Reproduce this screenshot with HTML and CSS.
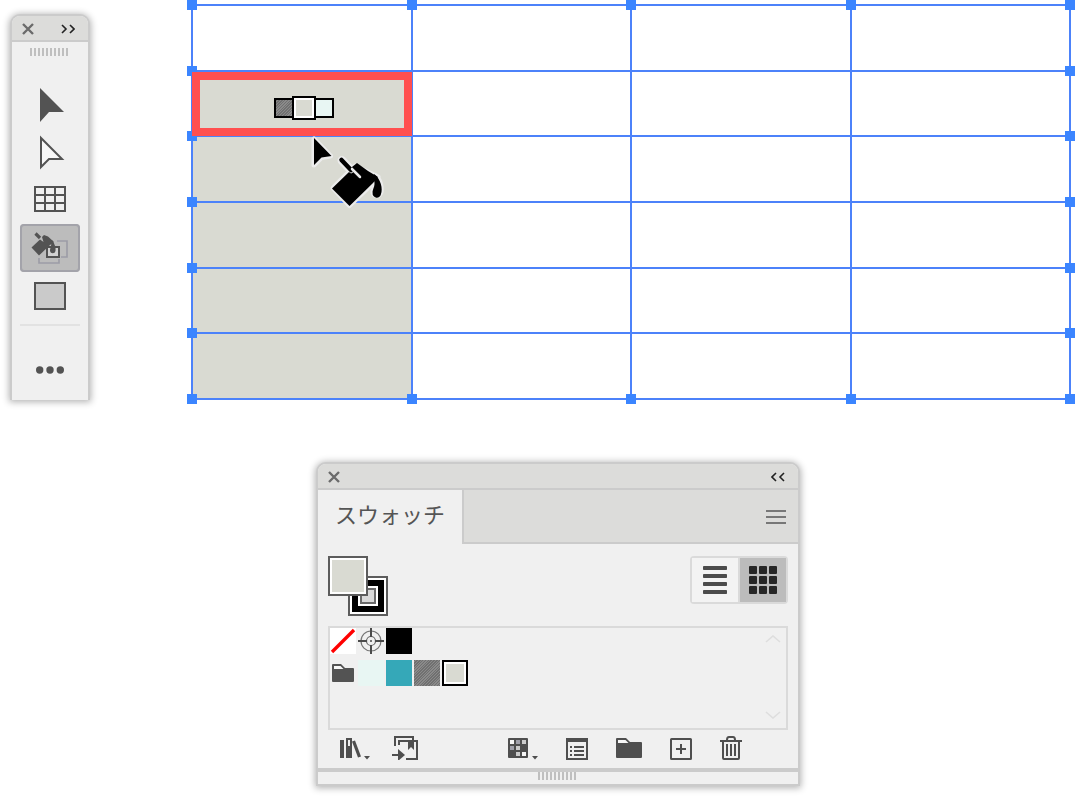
FILE: index.html
```
<!DOCTYPE html>
<html lang="ja">
<head>
  <meta charset="UTF-8" />
  <meta name="viewport" content="width=device-width, initial-scale=1" />
  <title>スウォッチ</title>
  <link rel="stylesheet" href="styles.css">
</head>
<body>

  <main class="workspace">
    <!-- Tools -->
    <aside class="toolbar">
      <div class="titlebar">
        <button type="button" class="icon-btn" aria-label="Close">
          <svg width="12" height="12" viewBox="0 0 12 12"><path d="M1 1L11 11M11 1L1 11" stroke="#6b6b6b" stroke-width="2.4" fill="none"/></svg>
        </button>
        <button type="button" class="icon-btn" aria-label="Expand">
          <svg width="14" height="10" viewBox="0 0 14 10"><path d="M1 1L5 5L1 9M9 1L13 5L9 9" stroke="#222" stroke-width="1.6" fill="none"/></svg>
        </button>
      </div>
      <div class="grip"></div>
      <div class="tools">
        <button type="button" class="tool" aria-label="Selection">
          <svg width="32" height="36" viewBox="0 0 32 36"><path d="M6 2V36L15 26H30Z" fill="#535353"/></svg>
        </button>
        <button type="button" class="tool" aria-label="Direct selection">
          <svg width="32" height="36" viewBox="0 0 32 36"><path d="M7 4V33L15 25H28Z" fill="#f7f7f7" stroke="#535353" stroke-width="2"/></svg>
        </button>
        <button type="button" class="tool" aria-label="Grid">
          <svg width="32" height="28" viewBox="0 0 32 28"><path d="M1 1H31V25H1ZM11 1V25M21 1V25M1 9H31M1 17H31" fill="none" stroke="#535353" stroke-width="2"/></svg>
        </button>
        <button type="button" class="tool active" aria-label="Live paint bucket">
          <svg width="60" height="48" viewBox="0 0 60 48">
            <path d="M37 17H47V33H41M19 34V39H39V35" fill="none" stroke="#9c9ca6" stroke-width="1.6"/>
            <path d="M27 23H39V33H27Z" fill="#d2d2d2" stroke="#535353" stroke-width="2"/>
            <path d="M11.500 23.500L20 15.500L23.500 18L22 13L24 11L28 12.500L34 18L30 21L19 31.500Z" fill="#535353"/>
            <path d="M15.500 9.500L20 14" stroke="#535353" stroke-width="3.200"/>
            <path d="M32 16C35 20 36 24 35.500 27A2.800 2.800 0 0 1 30 27C30 24 32 21 31 17Z" fill="#535353"/>
          </svg>
        </button>
        <button type="button" class="tool" aria-label="Rectangle">
          <svg width="32" height="28" viewBox="0 0 32 28"><path d="M1 1H31V27H1Z" fill="#cacaca" stroke="#535353" stroke-width="2"/></svg>
        </button>
      </div>
      <button type="button" class="tool more" aria-label="More tools">
        <svg width="28" height="8" viewBox="0 0 28 8" fill="#535353"><circle cx="3.700" cy="4" r="3.700"/><circle cx="14" cy="4" r="3.700"/><circle cx="24.300" cy="4" r="3.700"/></svg>
      </button>
    </aside>

    <!-- Artboard grid -->
    <section class="artboard">
      <div class="cell"><i class="handle tl"></i></div>
      <div class="cell"><i class="handle tl"></i></div>
      <div class="cell"><i class="handle tl"></i></div>
      <div class="cell"><i class="handle tl"></i><i class="handle tr"></i></div>

      <div class="cell filled">
        <i class="handle tl"></i>
        <div class="highlight">
          <span class="pick gray"></span>
          <span class="pick current"></span>
          <span class="pick mint"></span>
        </div>
        <svg class="cursor" width="80" height="80" viewBox="0 0 80 80">
          <g stroke="#ececec" stroke-width="5" stroke-linejoin="round" stroke-linecap="round">
            <path d="M6 7V33L13.500 25.500L22.500 24Z"/>
            <path d="M25 56L41 40L47 34L70 45L65 51L41.500 73.500Z"/>
            <path d="M34 28.500L42 37" stroke-width="9"/>
            <path d="M68 44C74 50 74 60 72 62A4 4 0 0 1 65 61C64 57 70 53 66 47Z"/>
          </g>
          <path d="M6 6V33L13.500 25.500L23.500 24Z"/>
          <path d="M24 56.500L41 40L49 46L44 35L49 31L60 39L70 45L65 51L41.500 74Z"/>
          <path d="M33.500 28L43 38" stroke="#000" stroke-width="4.500" stroke-linecap="round"/>
          <path d="M44 37L52 45" stroke="#ececec" stroke-width="2.500" stroke-linecap="round"/>
          <path d="M66 42C73 47 75 57 73 62A4.200 4.200 0 0 1 64.600 61C64 57 69 53 65 46Z"/>
        </svg>
      </div>
      <div class="cell"></div>
      <div class="cell"></div>
      <div class="cell"><i class="handle tr"></i></div>

      <div class="cell filled"><i class="handle tl"></i></div>
      <div class="cell"></div>
      <div class="cell"></div>
      <div class="cell"><i class="handle tr"></i></div>

      <div class="cell filled"><i class="handle tl"></i></div>
      <div class="cell"></div>
      <div class="cell"></div>
      <div class="cell"><i class="handle tr"></i></div>

      <div class="cell filled"><i class="handle tl"></i></div>
      <div class="cell"></div>
      <div class="cell"></div>
      <div class="cell"><i class="handle tr"></i></div>

      <div class="cell filled"><i class="handle tl"></i><i class="handle bl"></i></div>
      <div class="cell"><i class="handle bl"></i></div>
      <div class="cell"><i class="handle bl"></i></div>
      <div class="cell"><i class="handle tr"></i><i class="handle bl"></i><i class="handle br"></i></div>
    </section>
  </main>

  <!-- Swatches panel -->
  <section class="panel">
    <div class="titlebar">
      <button type="button" class="icon-btn" aria-label="Close">
        <svg width="12" height="12" viewBox="0 0 12 12"><path d="M1 1L11 11M11 1L1 11" stroke="#6b6b6b" stroke-width="2.4" fill="none"/></svg>
      </button>
      <button type="button" class="icon-btn" aria-label="Collapse">
        <svg width="14" height="10" viewBox="0 0 14 10"><path d="M5 1L1 5L5 9M13 1L9 5L13 9" stroke="#222" stroke-width="1.6" fill="none"/></svg>
      </button>
    </div>

    <div class="tabs">
      <button type="button" class="tab">スウォッチ</button>
      <div class="tab-rest">
        <button type="button" class="icon-btn" aria-label="Menu">
          <svg width="20" height="14" viewBox="0 0 20 14"><path d="M0 1H20M0 7H20M0 13H20" stroke="#777" stroke-width="2"/></svg>
        </button>
      </div>
    </div>

    <div class="options">
      <div class="paint">
        <button type="button" class="paint-fill" aria-label="Fill"></button>
        <button type="button" class="paint-stroke" aria-label="Stroke"><span></span></button>
      </div>
      <div class="views">
        <button type="button" class="view" aria-label="List view">
          <svg width="24" height="28" viewBox="0 0 24 28" fill="#4b4b4b"><rect width="24" height="4" rx="0.800"/><rect y="8" width="24" height="4" rx="0.800"/><rect y="16" width="24" height="4" rx="0.800"/><rect y="24" width="24" height="4" rx="0.800"/></svg>
        </button>
        <button type="button" class="view on" aria-label="Thumbnail view">
          <svg width="28" height="28" viewBox="0 0 28 28" fill="#262626">
            <rect width="8" height="8" rx="1"/><rect x="10" width="8" height="8" rx="1"/><rect x="20" width="8" height="8" rx="1"/>
            <rect y="10" width="8" height="8" rx="1"/><rect x="10" y="10" width="8" height="8" rx="1"/><rect x="20" y="10" width="8" height="8" rx="1"/>
            <rect y="20" width="8" height="8" rx="1"/><rect x="10" y="20" width="8" height="8" rx="1"/><rect x="20" y="20" width="8" height="8" rx="1"/>
          </svg>
        </button>
      </div>
    </div>

    <div class="list">
      <div class="swatches">
        <div class="swatch-row">
          <button type="button" class="swatch none" aria-label="None">
            <svg width="26" height="26" viewBox="0 0 26 26"><path d="M2 24L24 2" stroke="#f00" stroke-width="3.400"/></svg>
          </button>
          <button type="button" class="swatch" aria-label="Registration">
            <svg width="26" height="26" viewBox="0 0 26 26" fill="none">
              <circle cx="13" cy="13" r="10" stroke="#777" stroke-width="1.200"/>
              <circle cx="13" cy="13" r="4.500" stroke="#666" stroke-width="1.200"/>
              <path d="M13 0V9M13 17V26M0 13H9M17 13H26" stroke="#4b4b4b" stroke-width="2"/>
              <circle cx="13" cy="13" r="1" fill="#4b4b4b"/>
            </svg>
          </button>
          <button type="button" class="swatch black" aria-label="Black"></button>
        </div>
        <div class="swatch-row">
          <button type="button" class="swatch" aria-label="Color group">
            <svg width="26" height="26" viewBox="0 0 26 26"><path d="M2 22V5Q2 4 3 4H11L15 8H23Q24 8 24 9V21Q24 22 23 22H3Q2 22 2 21Z" fill="#535353"/><path d="M4 6H10.500L13.500 9H4Z" fill="#f7f7f7"/></svg>
          </button>
          <button type="button" class="swatch mint" aria-label="Mint"></button>
          <button type="button" class="swatch teal" aria-label="Teal"></button>
          <button type="button" class="swatch gray" aria-label="Gray"></button>
          <button type="button" class="swatch selected" aria-label="Light gray"></button>
        </div>
      </div>
      <div class="scroll">
        <svg width="16" height="8" viewBox="0 0 16 8"><path d="M1 7L8 1L15 7" fill="none" stroke="#dedede" stroke-width="1.600"/></svg>
        <svg width="16" height="8" viewBox="0 0 16 8"><path d="M1 1L8 7L15 1" fill="none" stroke="#dedede" stroke-width="1.600"/></svg>
      </div>
    </div>

    <div class="actions">
      <div class="action-group">
        <button type="button" class="icon-btn" aria-label="Swatch libraries">
          <svg width="30" height="24" viewBox="0 0 30 24" fill="#4f4f4f">
            <rect y="4" width="4" height="18"/><path d="M6 2H12V22H6ZM8 4V10H10V4Z" fill-rule="evenodd"/><path d="M12 5.500L15 4.500L21 20.500L18 21.500Z"/><path d="M24 20H30L27 23.500Z"/>
          </svg>
        </button>
        <button type="button" class="icon-btn" aria-label="Add to library">
          <svg width="26" height="24" viewBox="0 0 26 24" fill="none" stroke="#4f4f4f" stroke-width="2">
            <path d="M3 10V1H21V4M7 9V5H25V23H14"/><path d="M16 4H22V14L19 11L16 14Z" fill="#4f4f4f" stroke="none"/><path d="M0 19H8"/><path d="M6 13L13 19L6 25Z" fill="#4f4f4f" stroke="none"/>
          </svg>
        </button>
      </div>
      <div class="action-group wide">
        <button type="button" class="icon-btn" aria-label="Show swatch kinds">
          <svg width="30" height="24" viewBox="0 0 30 24">
            <rect y="2" width="20" height="20" rx="1" fill="#4f4f4f"/>
            <path d="M2 4H6V8H2ZM14 16H18V20H14Z" fill="#f7f7f7"/><path d="M14 4H18V8H14ZM8 10H12V14H8ZM8 16H12V20H8Z" fill="#ccc"/><path d="M8 4H12V8H8ZM2 10H6V14H2Z" fill="#a0a0aa"/>
            <path d="M24 20H30L27 23.500Z" fill="#4f4f4f"/>
          </svg>
        </button>
        <button type="button" class="icon-btn" aria-label="Swatch options">
          <svg width="22" height="24" viewBox="0 0 22 24" fill="none" stroke="#4f4f4f" stroke-width="2"><path d="M1 3H21V23H1Z"/><path d="M1 4H21" stroke-width="4"/><path d="M4 11H6M8 11H18M4 15H6M8 15H18M4 19H6M8 19H18"/></svg>
        </button>
        <button type="button" class="icon-btn" aria-label="New color group">
          <svg width="26" height="24" viewBox="0 0 26 24"><path d="M0 3Q0 2 1 2H10L14 6H25Q26 6 26 7V21Q26 22 25 22H1Q0 22 0 21Z" fill="#4f4f4f"/><path d="M2 4H9.500L12.500 7H2Z" fill="#f7f7f7"/></svg>
        </button>
        <button type="button" class="icon-btn" aria-label="New swatch">
          <svg width="22" height="24" viewBox="0 0 22 24" fill="none" stroke="#4f4f4f" stroke-width="2"><rect x="1" y="3" width="20" height="20" rx="0.500"/><path d="M11 8V18M6 13H16"/></svg>
        </button>
        <button type="button" class="icon-btn" aria-label="Delete swatch">
          <svg width="22" height="24" viewBox="0 0 22 24" fill="none" stroke="#4f4f4f" stroke-width="2"><path d="M0 5H22M3 5V22Q3 23 4 23H18Q19 23 19 22V5M7 8V20M11 8V20M15 8V20M7 4Q7 1 9 1H13Q15 1 15 4"/></svg>
        </button>
      </div>
    </div>
    <div class="resize"><div class="grip"></div></div>
  </section>

</body>
</html>
```
FILE: styles.css
```
* {
  box-sizing: border-box;
}

body {
  margin: 0;
  background: #fff;
  font-family: "Noto Sans CJK JP", sans-serif;
  overflow-x: hidden;
}

button {
  padding: 0;
  border: none;
  background: none;
  font-family: inherit;
  cursor: pointer;
}

svg {
  display: block;
}

.workspace {
  display: flex;
  gap: 101px;
  padding: 4px 4px 0 10px;
}

/* Shared panel parts */
.toolbar,
.panel {
  background: #f0f0f0;
  border: 2px solid #cbcbcb;
  border-radius: 10px 10px 0 0;
  box-shadow: 0 1px 7px 1px rgba(0, 0, 0, 0.3);
}

.titlebar {
  display: flex;
  justify-content: space-between;
  align-items: center;
  height: 26px;
  padding: 2px 13px 0 10px;
  background: #dcdcda;
  border-bottom: 2px solid #cbcbcb;
  border-radius: 8px 8px 0 0;
}

.grip {
  width: 40px;
  height: 8px;
  margin: 0 auto;
  background: repeating-linear-gradient(to right, #bfbfbf 0 2px, transparent 2px 4px);
}

/* Toolbar */
.toolbar {
  width: 80px;
  flex: none;
  margin-top: 10px;
  border-bottom: none;
}

.toolbar .grip {
  margin-top: 6px;
}

.tools {
  margin: 24px 8px 0;
  padding-bottom: 4px;
  border-bottom: 2px solid #e2e2e2;
}

.tool {
  display: flex;
  justify-content: center;
  align-items: center;
  width: 100%;
  height: 48px;
}

.tool.active {
  background: #bcbcbc;
  border-radius: 4px;
  box-shadow: inset 0 0 0 2px #a3a3aa;
}

.more {
  margin: 20px 0 6px;
}

/* Artboard */
.artboard {
  flex: 1;
  display: grid;
  grid-template-columns: repeat(4, 1fr);
  grid-template-rows: repeat(6, 1fr);
  gap: 2px;
  padding: 2px;
  background: #4c82fa;
}

.cell {
  position: relative;
  background: #fff;
}

.filled {
  background: #d9dad2;
}

.handle {
  position: absolute;
  z-index: 1;
  width: 10px;
  height: 10px;
  background: #3b85ff;
}

.tl {
  top: -6px;
  left: -6px;
}

.tr {
  top: -6px;
  right: -6px;
}

.bl {
  bottom: -6px;
  left: -6px;
}

.br {
  bottom: -6px;
  right: -6px;
}

.highlight {
  position: absolute;
  z-index: 2;
  inset: 0 -1px -1px;
  display: flex;
  justify-content: center;
  align-items: center;
  padding: 8px 0 0 4px;
  border: 8px solid #ff4f4f;
}

.pick {
  width: 20px;
  height: 20px;
  border: 2px solid #000;
}

.pick.current {
  position: relative;
  width: 24px;
  height: 24px;
  margin: 0 -2px;
  background: #d9dad2;
  box-shadow: inset 0 0 0 2px #fff;
}

.cursor {
  position: absolute;
  z-index: 3;
  top: 60px;
  left: 115px;
}

.mint {
  background: #e8f6f3;
}

.teal {
  background: #35a8b8;
}

.black {
  background: #000;
}

.gray {
  background: repeating-linear-gradient(135deg, #707070 0 1px, #8a8a8a 1px 2px);
}

/* Swatches panel */
.panel {
  width: 45%;
  min-width: 420px;
  margin: 62px 0 10px 316px;
}

.tabs {
  display: flex;
  height: 54px;
}

.tab {
  padding: 0 17px 8px;
  font-size: 22px;
  line-height: 32px;
  color: #555;
}

.tab-rest {
  flex: 1;
  display: flex;
  justify-content: flex-end;
  align-items: center;
  padding: 2px 12px 0 0;
  background: #dcdcda;
  border-left: 2px solid #cbcbcb;
  border-bottom: 2px solid #cbcbcb;
}

.options {
  display: flex;
  justify-content: space-between;
  align-items: flex-start;
  padding: 12px 10px 10px;
}

.paint {
  display: grid;
  grid-template-columns: repeat(3, 20px);
  grid-template-rows: repeat(3, 20px);
}

.paint-fill,
.paint-stroke {
  border: 2px solid #5c5c5c;
  box-shadow: inset 0 0 0 2px #fff;
}

.paint-fill {
  grid-area: 1 / 1 / 3 / 3;
  z-index: 1;
  background: #d9dad2;
}

.paint-stroke {
  grid-area: 2 / 2 / 4 / 4;
  padding: 2px;
  background: #000;
}

.paint-stroke span {
  display: block;
  width: 20px;
  height: 20px;
  margin: 0 auto;
  border: 2px solid #fff;
  background: #d9d9d9;
  box-shadow: inset 0 0 0 2px #6a6a6a;
}

.views {
  display: flex;
  gap: 2px;
  border: 2px solid #dadada;
  border-radius: 4px;
  background: #dadada;
}

.view {
  display: flex;
  justify-content: center;
  align-items: center;
  width: 46px;
  height: 44px;
  background: #f3f3f3;
}

.view.on {
  background: #bcbcbc;
}

.list {
  display: flex;
  justify-content: space-between;
  height: 104px;
  margin: 0 10px;
  border: 2px solid #dadada;
}

.swatches {
  display: flex;
  flex-direction: column;
  gap: 6px;
}

.swatch-row {
  display: flex;
  gap: 2px;
}

.swatch {
  width: 26px;
  height: 26px;
}

.none {
  background: #fff;
}

.selected {
  border: 2px solid #000;
  background: #d9dad2;
  box-shadow: inset 0 0 0 2px #fff;
}

.scroll {
  display: flex;
  flex-direction: column;
  justify-content: space-between;
  padding: 7px 5px 9px;
}

.actions {
  display: flex;
  justify-content: space-between;
  padding: 6px 56px 8px 22px;
}

.action-group {
  display: flex;
  gap: 22px;
}

.action-group.wide {
  gap: 28px;
}

.resize {
  height: 16px;
  border-top: 4px solid #cbcbcb;
}
```
